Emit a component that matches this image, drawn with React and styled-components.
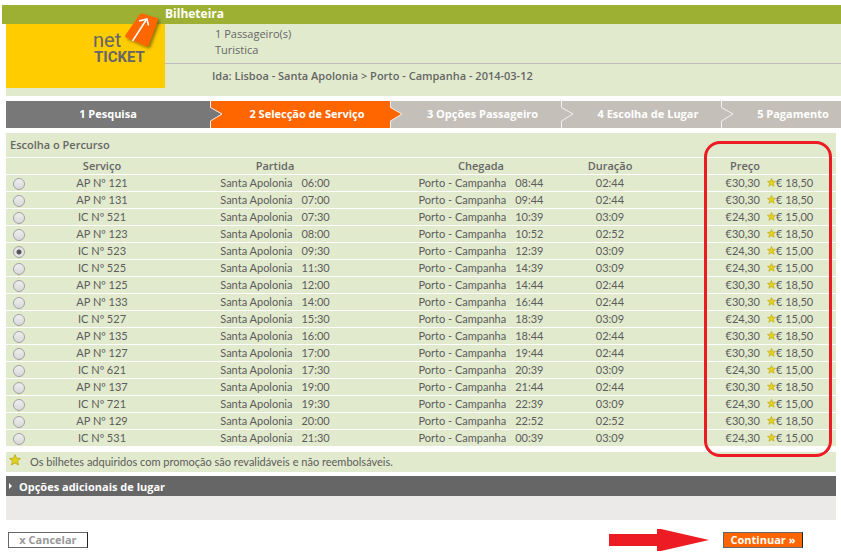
import React, { useState } from 'react';
import styled, { createGlobalStyle } from 'styled-components';

const steps = [
  { label: '1 Pesquisa', color: '#787878' },
  { label: '2 Selecção de Serviço', color: '#ff6600' },
  { label: '3 Opções Passageiro', color: '#c5bfb9' },
  { label: '4 Escolha de Lugar', color: '#c5bfb9' },
  { label: '5 Pagamento', color: '#c5bfb9', last: true },
];

const columns = [26, 140, 206, 206, 52, 126, 74];

const trains = [
  ['AP Nº 121', '06:00', '08:44', '02:44'],
  ['AP Nº 131', '07:00', '09:44', '02:44'],
  ['IC Nº 521', '07:30', '10:39', '03:09'],
  ['AP Nº 123', '08:00', '10:52', '02:52'],
  ['IC Nº 523', '09:30', '12:39', '03:09'],
  ['IC Nº 525', '11:30', '14:39', '03:09'],
  ['AP Nº 125', '12:00', '14:44', '02:44'],
  ['AP Nº 133', '14:00', '16:44', '02:44'],
  ['IC Nº 527', '15:30', '18:39', '03:09'],
  ['AP Nº 135', '16:00', '18:44', '02:44'],
  ['AP Nº 127', '17:00', '19:44', '02:44'],
  ['IC Nº 621', '17:30', '20:39', '03:09'],
  ['AP Nº 137', '19:00', '21:44', '02:44'],
  ['IC Nº 721', '19:30', '22:39', '03:09'],
  ['AP Nº 129', '20:00', '22:52', '02:52'],
  ['IC Nº 531', '21:30', '00:39', '03:09'],
];

function Star({ size }) {
  return (
    <svg width={size} height={size} viewBox="0 0 12 12" aria-hidden="true">
      <path
        d="M6 0.6 L7.5 4.2 L11.4 4.5 L8.5 7.1 L9.5 11 L6 8.9 L2.5 11 L3.5 7.1 L0.6 4.5 L4.5 4.2 Z"
        fill="#e3d21c"
        stroke="#c2a81e"
        strokeWidth="0.9"
      />
    </svg>
  );
}

function Logo() {
  return (
    <LogoArt width="159" height="75" viewBox="0 0 159 75">
      <defs>
        <filter id="shade" x="-30%" y="-30%" width="170%" height="170%">
          <feDropShadow dx="2" dy="2" stdDeviation="1.5" floodColor="#4a3a00" floodOpacity="0.6" />
        </filter>
      </defs>
      <LogoText x="87" y="34" $size={20} $weight={400}>net</LogoText>
      <LogoText x="88" y="49" $size={15} $weight={700}>TICKET</LogoText>
      <path
        d="M136 0.5 L151 5 Q152.5 5.5 152 7 L142.5 32 Q141.5 34 139.5 33 L120 24.5 Q118.5 23.5 119.5 22 L133.5 1.5 Q134.5 0 136 0.5 Z"
        fill="#ff6600"
        filter="url(#shade)"
      />
      <path d="M126.5 28 L140.5 6.5 M133 8 L141 6 L142.5 12.5" fill="none" stroke="#fff" strokeWidth="1.5" />
    </LogoArt>
  );
}

function App() {
  const [selected, setSelected] = useState('IC Nº 523');
  const [open, setOpen] = useState(false);

  return (
    <Page>
      <GlobalStyle />
      <TitleBar>
        <h1>Bilheteira</h1>
      </TitleBar>
      <Main>
        <Summary>
          <Brand>
            <Logo />
          </Brand>
          <Details>
            <Passengers>
              <div>1 Passageiro(s)</div>
              <div>Turistica</div>
            </Passengers>
            <Journey>Ida: Lisboa - Santa Apolonia &gt; Porto - Campanha - 2014-03-12</Journey>
          </Details>
        </Summary>

        <Steps>
          {steps.map((step, i) => (
            <Step key={step.label} $color={step.color} $first={i === 0} $last={step.last}>
              {i > 0 && (
                <Chevron width="14" height="27" viewBox="0 0 14 27">
                  <path d="M0 6 L12 13 L0 20 Z" fill={steps[i - 1].color} />
                  <path d="M0.5 0 V6.5 L12 13 L0.5 20 V27" fill="none" stroke="#f4f2f0" strokeWidth="1" />
                </Chevron>
              )}
              {step.label}
            </Step>
          ))}
        </Steps>

        <Content>
          <TableArea>
            <Caption>Escolha o Percurso</Caption>
            <Trains>
              <colgroup>
                {columns.map((width, i) => <Col key={i} $width={width} />)}
              </colgroup>
              <thead>
                <tr>
                  <Head />
                  <Head>Serviço</Head>
                  <Head>Partida</Head>
                  <Head>Chegada</Head>
                  <Head>Duração</Head>
                  <Head $align="right">Preço</Head>
                  <Head />
                </tr>
              </thead>
              <tbody>
                {trains.map(([name, departure, arrival, duration]) => {
                  const fast = name.startsWith('AP');
                  return (
                    <tr key={name}>
                      <Cell>
                        <Radio
                          type="radio"
                          name="service"
                          id={name}
                          checked={selected === name}
                          onChange={() => setSelected(name)}
                        />
                      </Cell>
                      <Cell><label htmlFor={name}>{name}</label></Cell>
                      <Cell><Stop><span>Santa Apolonia</span><span>{departure}</span></Stop></Cell>
                      <Cell><Stop><span>Porto - Campanha</span><span>{arrival}</span></Stop></Cell>
                      <Cell>{duration}</Cell>
                      <Cell $align="right">{fast ? '€30,30' : '€24,30'}</Cell>
                      <Cell $align="left">
                        <Promo><Star size={9} />{fast ? '€ 18,50' : '€ 15,00'}</Promo>
                      </Cell>
                    </tr>
                  );
                })}
              </tbody>
            </Trains>
            <PriceMark />
          </TableArea>

          <Note>
            <Star size={12} />
            <span>Os bilhetes adquiridos com promoção são revalidáveis e não reembolsáveis.</span>
          </Note>

          <Options type="button" aria-expanded={open} onClick={() => setOpen(!open)}>
            <svg width="3" height="6" viewBox="0 0 3 6"><path d="M0 0 L3 3 L0 6 Z" fill="#fff" /></svg>
            Opções adicionais de lugar
          </Options>
          <OptionsBody />

          <Actions>
            <Button type="button">x Cancelar</Button>
            <Arrow width="100" height="22" viewBox="0 0 100 22">
              <path d="M0 5 H48 V0 H52 L100 11 L52 22 H48 V17 H0 Z" fill="#ed1c24" />
            </Arrow>
            <Button type="button" $primary>Continuar »</Button>
          </Actions>
        </Content>
      </Main>
    </Page>
  );
}

const GlobalStyle = createGlobalStyle`
  * {
    box-sizing: border-box;
  }

  body {
    margin: 0;
    background: #fff;
    color: #666;
    font-family: "Open Sans", sans-serif;
    font-size: 11px;
  }
`;

const Page = styled.div`
  padding: 5px 0 6px 2px;
`;

const TitleBar = styled.header`
  height: 19px;
  padding-left: 163px;
  background: #9eb033;

  h1 {
    margin: 0;
    color: #fff;
    font-size: 12px;
    font-weight: 700;
    line-height: 18px;
  }
`;

const Main = styled.main`
  padding-left: 4px;
`;

const Summary = styled.section`
  display: flex;
  align-items: flex-start;
  padding-bottom: 8px;
  background: #e1eacd;
`;

const Brand = styled.div`
  position: relative;
  width: 159px;
  height: 64px;
  background: #ffcc00;
`;

const LogoArt = styled.svg`
  position: absolute;
  left: 0;
  bottom: 0;
`;

const LogoText = styled.text`
  fill: #666;
  font-family: Roboto, sans-serif;
  font-size: ${(props) => props.$size}px;
  font-weight: ${(props) => props.$weight};
`;

const Details = styled.div`
  flex: 1;
`;

const Passengers = styled.div`
  padding: 2px 0 5px 50px;
  border-bottom: 1px solid #c2bcbc;
  line-height: 16px;
`;

const Journey = styled.div`
  padding: 4px 0 0 47px;
  font-weight: 600;
  line-height: 16px;
`;

const Steps = styled.nav`
  display: grid;
  grid-template-columns: 204fr 180fr 171fr 160fr 120fr;
  margin: 5px 0;
`;

const Step = styled.div`
  position: relative;
  min-width: 0;
  height: 27px;
  padding-left: ${(props) => (props.$first ? 0 : props.$last ? 24 : 14)}px;
  background: ${(props) => props.$color};
  color: #fff;
  font-weight: 700;
  line-height: 26px;
  text-align: center;
  white-space: nowrap;
`;

const Chevron = styled.svg`
  position: absolute;
  top: 0;
  left: 0;
`;

const Content = styled.div`
  margin-right: 5px;
`;

const TableArea = styled.section`
  position: relative;
`;

const Caption = styled.h2`
  height: 24px;
  margin: 0 0 1px;
  padding-left: 4px;
  background: #e1eacd;
  font-size: 11px;
  font-weight: 600;
  line-height: 24px;
`;

const Trains = styled.table`
  width: 100%;
  table-layout: fixed;
  border-collapse: collapse;
`;

const Col = styled.col`
  width: ${(props) => props.$width}px;
`;

const Cell = styled.td`
  height: 17px;
  padding: 0 2px;
  background: #e1eacd;
  box-shadow: inset 0 -1px #fff;
  color: #5c5c5c;
  font-family: Lato, sans-serif;
  line-height: 15px;
  text-align: ${(props) => props.$align || 'center'};
  vertical-align: top;
  white-space: nowrap;
`;

const Head = styled(Cell).attrs({ as: 'th' })`
  color: #666;
  font-family: "Open Sans", sans-serif;
  font-weight: 600;
`;

const Radio = styled.input`
  appearance: none;
  display: block;
  width: 12px;
  height: 12px;
  margin: 3px auto 0;
  border: 1px solid #a2a2a2;
  border-radius: 50%;
  background: linear-gradient(#eee, #d9d9d9);

  &:checked {
    background: radial-gradient(circle, #555 0 2px, #e6e6e6 3px);
  }
`;

const Stop = styled.span`
  display: flex;
  justify-content: center;
  gap: 9px;
`;

const Promo = styled.span`
  display: flex;
  align-items: center;
  padding-left: 3px;
`;

const PriceMark = styled.div`
  position: absolute;
  top: 8px;
  right: 4px;
  bottom: -10px;
  width: 128px;
  border: 3px solid #ed1c24;
  border-radius: 16px;
  pointer-events: none;
`;

const Note = styled.p`
  display: flex;
  align-items: flex-start;
  gap: 9px;
  height: 20px;
  margin: 5px 0 4px;
  padding: 2px 3px;
  background: #e1eacd;
  color: #5c5c5c;
  font-family: Lato, sans-serif;
  line-height: 16px;
`;

const Options = styled.button`
  display: flex;
  align-items: center;
  gap: 7px;
  width: 100%;
  height: 20px;
  padding: 0 3px;
  border: 0;
  background: #666;
  color: #fff;
  font: inherit;
  font-weight: 700;
`;

const OptionsBody = styled.div`
  height: 24px;
  background: #ebeae8;
`;

const Actions = styled.div`
  display: flex;
  align-items: center;
  gap: 14px;
  padding: 9px 33px 0 2px;
`;

const Button = styled.button`
  width: 80px;
  height: 16px;
  padding: 0;
  border: 1px solid;
  border-color: #666 #222 #666 #666;
  background: ${(props) => (props.$primary ? '#ff6600' : '#fff')};
  color: ${(props) => (props.$primary ? '#fff' : '#999')};
  font: inherit;
  font-weight: 700;
  line-height: 14px;
`;

const Arrow = styled.svg`
  margin-left: auto;
`;

export default App;
